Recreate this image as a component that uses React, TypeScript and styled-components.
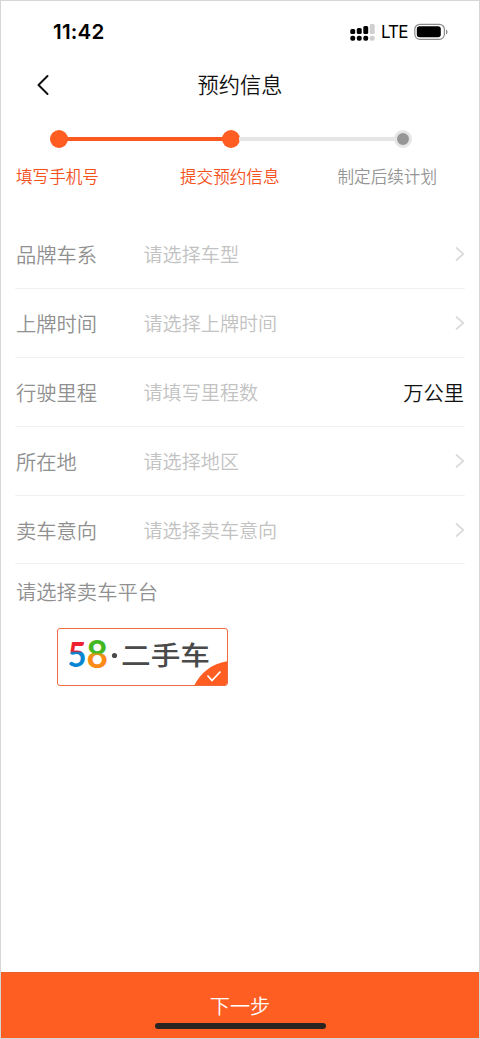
import React from "react";
import styled, { createGlobalStyle } from "styled-components";

const Global = createGlobalStyle`
  * { box-sizing: border-box; }
  body { margin: 0; background: #fff; }
`;

const Screen = styled.main`
  width: 480px;
  height: 1039px;
  display: flex;
  flex-direction: column;
  border: 1px solid #d6d6d6;
  background: #fff;
  font-family: "Noto Sans CJK SC", sans-serif;
  font-weight: 300;
  overflow: hidden;
`;

const StatusBar = styled.header`
  height: 61px;
  flex: none;
  display: flex;
  justify-content: space-between;
  padding: 19px 31px 0 52px;
  font-family: Inter, sans-serif;
  color: #000;
`;

const Clock = styled.span`
  font-size: 20.6px;
  font-weight: 600;
  line-height: 24px;
  letter-spacing: 0.2px;
`;

const StatusIcons = styled.div`
  display: flex;
  height: 24px;
  align-items: center;
`;

const Network = styled.span`
  margin: 0 7px 0 6px;
  font: 400 17px/24px Inter, sans-serif;
  letter-spacing: -0.9px;
  width: 26px;
`;

const NavBar = styled.nav`
  height: 46px;
  flex: none;
  display: grid;
  grid-template-columns: 70px 1fr 70px;
  align-items: center;
`;

const BackButton = styled.button`
  width: 28px;
  height: 28px;
  padding: 0;
  margin-left: 28px;
  border: 0;
  background: none;
  display: grid;
  place-items: center;
`;

const Title = styled.h1`
  margin: 0 0 2px;
  text-align: center;
  font-size: 21.2px;
  font-weight: 350;
  line-height: 30px;
  color: #111;
`;

const Track = styled.div`
  display: flex;
  align-items: center;
  height: 18px;
  flex: none;
  margin: 22px 67px 0 49px;
`;

const Dot = styled.i<{ $done?: boolean }>`
  width: 18px;
  height: 18px;
  flex: none;
  border-radius: 50%;
  border: ${(p) => (p.$done ? "0" : "3px solid #e6e6e6")};
  background: ${(p) => (p.$done ? "#ff5d22" : "#969696")};
`;

const Line = styled.i<{ $done?: boolean }>`
  flex: 1;
  height: 4px;
  margin: 0 -1px;
  background: ${(p) => (p.$done ? "#fa5a20" : "#e5e5e5")};
`;

const StepLabels = styled.div`
  display: grid;
  grid-template-columns: 164px 157.5px auto;
  flex: none;
  margin: 16px 0 0 15px;
`;

const StepLabel = styled.span<{ $done?: boolean }>`
  font-size: 16.6px;
  line-height: 24px;
  font-weight: 350;
  color: ${(p) => (p.$done ? "#f4511c" : "#959595")};
`;

const Form = styled.section`
  margin: 32px 14px 0;
  flex: none;
`;

const Row = styled.div`
  height: 68.9px;
  display: flex;
  align-items: center;
  border-bottom: 1.5px solid #f2f2f2;
`;

const Label = styled.label`
  width: 128px;
  padding-left: 1px;
  font-size: 20.3px;
  font-weight: 350;
  line-height: 30px;
  color: #909090;
`;

const Placeholder = styled.span`
  flex: 1;
  padding-left: 0.5px;
  font-size: 19.1px;
  font-weight: 350;
  line-height: 30px;
  color: #c2c2c2;
`;

const Unit = styled.span`
  margin-right: 1px;
  font-size: 20.3px;
  line-height: 30px;
  font-weight: 350;
  color: #111;
`;

const PlatformHeading = styled.h2`
  margin: 12px 15px 0;
  flex: none;
  font-size: 20.3px;
  line-height: 30px;
  font-weight: 350;
  color: #909090;
`;

const PlatformCard = styled.button`
  position: relative;
  width: 171px;
  height: 58px;
  flex: none;
  margin: 22px 0 0 56px;
  padding: 0 0 0 5px;
  display: flex;
  align-items: center;
  border: 1.5px solid #ef6a3e;
  border-radius: 3px;
  background: #fff;
  overflow: hidden;
`;

const Brand = styled.svg`
  flex: none;
`;

const Selected = styled.svg`
  position: absolute;
  right: -1px;
  bottom: -1px;
`;

const NextButton = styled.button`
  position: relative;
  width: 100%;
  height: 66px;
  flex: none;
  margin-top: auto;
  padding: 0;
  border: 0;
  border-top: 1px solid #ed5e2c;
  background: #ff5e22;
  color: #fff;
  font-family: inherit;
  font-weight: 350;
  font-size: 20.2px;
  line-height: 66px;
`;

const HomeIndicator = styled.i`
  position: absolute;
  left: 153.5px;
  bottom: 9px;
  width: 171px;
  height: 6px;
  border-radius: 3px;
  background: #272421;
`;

const Chevron = () => (
  <svg width="10" height="16" viewBox="0 0 10 16" fill="none" stroke="#dcdcdc" strokeWidth="1.8">
    <path d="M1 1.5 8.3 8 1 14.5" />
  </svg>
);

const Signal = () => (
  <svg width="25" height="18" viewBox="0 0 25 18">
    {[0, 1, 2, 3].map((i) => (
      <g key={i} fill={i === 3 ? "#cfcfcf" : "#000"}>
        <rect x={0.3 + i * 6.5} y={[6, 5, 3, 1][i]} width="4.9" height={[5, 6, 8, 10][i]} rx="1.5" />
        <rect x={0.3 + i * 6.5} y="12.8" width="4.9" height="4.9" rx="2" />
      </g>
    ))}
  </svg>
);

const Battery = () => (
  <svg width="34" height="18" viewBox="0 0 34 18">
    <rect x="0.8" y="1.3" width="29.6" height="15" rx="5" fill="none" stroke="#8b8b8b" strokeWidth="1.2" />
    <rect x="2.8" y="3.3" width="24" height="11" rx="2.8" fill="#000" />
    <path d="M32 6.5c2 .9 2 4 0 5z" fill="#8b8b8b" />
  </svg>
);

const PlatformBrand = () => (
  <Brand width="160" height="55" viewBox="0 0 160 55">
    <defs>
      <linearGradient id="five" gradientUnits="userSpaceOnUse" x1="0" y1="11" x2="0" y2="39">
        <stop offset=".36" stopColor="#ef2030" />
        <stop offset=".42" stopColor="#0785d2" />
      </linearGradient>
      <linearGradient id="eight" gradientUnits="userSpaceOnUse" x1="0" y1="11" x2="0" y2="39">
        <stop offset=".42" stopColor="#43b720" />
        <stop offset=".46" stopColor="#c4a315" />
        <stop offset=".54" stopColor="#fb8b14" />
      </linearGradient>
    </defs>
    <g fontFamily="Lato, sans-serif" fontWeight="700">
      <text x="4.6" y="36.8" fontSize="33.5" fill="url(#five)" textLength="19" lengthAdjust="spacingAndGlyphs">5</text>
      <text x="23.6" y="38" fontSize="38" fill="url(#eight)" textLength="21.5" lengthAdjust="spacingAndGlyphs">8</text>
    </g>
    <circle cx="51.5" cy="25.5" r="2.6" fill="#4a4a4a" />
    <text x="58" y="34.5" fill="#4a4a4a" fontFamily="Noto Sans CJK SC, sans-serif" fontSize="26" fontWeight="500" textLength="89" lengthAdjust="spacingAndGlyphs">二手车</text>
  </Brand>
);

const fields = [
  { label: "品牌车系", hint: "请选择车型" },
  { label: "上牌时间", hint: "请选择上牌时间" },
  { label: "行驶里程", hint: "请填写里程数", unit: "万公里" },
  { label: "所在地", hint: "请选择地区" },
  { label: "卖车意向", hint: "请选择卖车意向" },
];

export default function App() {
  return (
    <Screen>
      <Global />
      <StatusBar>
        <Clock>11:42</Clock>
        <StatusIcons>
          <Signal />
          <Network>LTE</Network>
          <Battery />
        </StatusIcons>
      </StatusBar>
      <NavBar>
        <BackButton aria-label="返回">
          <svg width="14" height="22" viewBox="0 0 14 22" fill="none" stroke="#111" strokeWidth="2" strokeLinecap="round" strokeLinejoin="round">
            <path d="M11.5 2 2.5 11l9 9" />
          </svg>
        </BackButton>
        <Title>预约信息</Title>
      </NavBar>
      <Track>
        <Dot $done />
        <Line $done />
        <Dot $done />
        <Line />
        <Dot />
      </Track>
      <StepLabels>
        <StepLabel $done>填写手机号</StepLabel>
        <StepLabel $done>提交预约信息</StepLabel>
        <StepLabel>制定后续计划</StepLabel>
      </StepLabels>
      <Form>
        {fields.map((f) => (
          <Row key={f.label}>
            <Label>{f.label}</Label>
            <Placeholder>{f.hint}</Placeholder>
            {f.unit ? <Unit>{f.unit}</Unit> : <Chevron />}
          </Row>
        ))}
      </Form>
      <PlatformHeading>请选择卖车平台</PlatformHeading>
      <PlatformCard>
        <PlatformBrand />
        <Selected width="34" height="25" viewBox="0 0 34 25">
          <path d="M0 25C6 12 18 2 34 0v25z" fill="#ff5d22" />
          <path d="m13.5 14.5 4.5 5 8.5-9" fill="none" stroke="#fff" strokeWidth="1.8" />
        </Selected>
      </PlatformCard>
      <NextButton>
        下一步
        <HomeIndicator />
      </NextButton>
    </Screen>
  );
}
